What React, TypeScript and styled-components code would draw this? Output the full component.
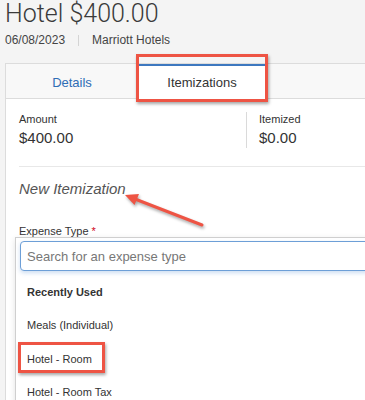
import * as React from 'react';
import styled, { createGlobalStyle } from 'styled-components';

const annotationRed = '#ee5444';

const GlobalStyle = createGlobalStyle`
  html, body {
    margin: 0;
    padding: 0;
    background: #f4f4f4;
    overflow: hidden;
  }
  body {
    font-family: "Liberation Sans", Arial, sans-serif;
    color: #333;
  }
`;

const Page = styled.div`
  position: relative;
  width: 365px;
  height: 400px;
  overflow: hidden;
  padding-left: 5px;
  box-sizing: border-box;
`;

const Title = styled.h1`
  margin: 0;
  font-family: Roboto, "Liberation Sans", sans-serif;
  font-weight: 300;
  font-size: 25px;
  line-height: 28px;
  color: #3a3a3a;
  white-space: nowrap;
`;

const Meta = styled.div`
  display: flex;
  align-items: center;
  height: 14px;
  margin-top: 5px;
  font-size: 12px;
  color: #444;
`;

const MetaDivider = styled.span`
  width: 1px;
  height: 11px;
  margin: 0 13px;
  background: #d4d4d4;
`;

const Card = styled.section`
  width: 560px;
  height: 400px;
  margin-top: 16px;
  border-top: 1px solid #dcdcdc;
  border-left: 1px solid #dcdcdc;
  background: #fff;
`;

const TabBar = styled.div`
  display: flex;
  height: 35px;
  box-sizing: border-box;
  background: #f8f8f8;
  border-bottom: 1px solid #dcdcdc;
`;

const Tab = styled.div<{ $active?: boolean; $width: number }>`
  position: relative;
  display: flex;
  align-items: center;
  justify-content: center;
  width: ${(p) => p.$width}px;
  box-sizing: border-box;
  font-size: 13px;
  color: ${(p) => (p.$active ? '#333' : '#2f6db5')};
  background: ${(p) => (p.$active ? '#fff' : 'transparent')};
  border-top: 2px solid ${(p) => (p.$active ? '#3d78bf' : 'transparent')};
  border-left: 1px solid ${(p) => (p.$active ? '#dcdcdc' : 'transparent')};
  border-right: 1px solid ${(p) => (p.$active ? '#dcdcdc' : 'transparent')};
  margin-bottom: ${(p) => (p.$active ? '-1px' : '0')};

  ${(p) =>
    p.$active &&
    `
    &::after {
      content: '';
      position: absolute;
      top: -12px;
      left: -3px;
      right: -3px;
      bottom: -3px;
      border: 3px solid ${annotationRed};
      box-shadow: 1px 2px 3px rgba(0, 0, 0, 0.35);
    }
  `}
`;

const Body = styled.div`
  padding: 13px 0 0 13px;
`;

const Summary = styled.div`
  display: flex;
  height: 36px;
`;

const SummaryCol = styled.div<{ $width?: number }>`
  width: ${(p) => (p.$width ? `${p.$width}px` : 'auto')};
  padding-left: ${(p) => (p.$width ? 0 : 12)}px;
`;

const SummaryDivider = styled.div`
  width: 1px;
  height: 36px;
  background: #dadada;
`;

const SmallLabel = styled.div`
  font-size: 11px;
  line-height: 15px;
  color: #333;
`;

const Amount = styled.div`
  margin-top: 2px;
  font-size: 15px;
  line-height: 18px;
  color: #333;
`;

const Rule = styled.div`
  height: 1px;
  margin-top: 18px;
  background: #e8e8e8;
`;

const SectionTitle = styled.div`
  margin-top: 13px;
  font-size: 15px;
  line-height: 18px;
  font-style: italic;
  color: #555;
`;

const FieldLabel = styled.div`
  margin-top: 26px;
  margin-bottom: -1px;
  font-size: 11px;
  line-height: 14px;
  color: #333;
`;

const Required = styled.span`
  margin-left: 3px;
  color: #d0021b;
`;

const Popup = styled.div`
  margin-left: -4px;
  padding: 3px 0 0 4px;
  height: 200px;
  border: 1px solid #cfcfcf;
  background: #fff;
  box-shadow: 0 2px 6px rgba(0, 0, 0, 0.12);
`;

const SearchInput = styled.input`
  display: block;
  width: 600px;
  height: 30px;
  box-sizing: border-box;
  margin: 0;
  padding: 0 6px;
  border: 1px solid #6d9fd7;
  border-radius: 4px;
  outline: none;
  box-shadow: 0 2px 4px rgba(109, 159, 215, 0.35);
  font-family: "Liberation Sans", Arial, sans-serif;
  font-size: 13px;
  color: #333;

  &::placeholder {
    color: #777;
  }
`;

const OptionList = styled.div`
  padding-top: 4px;
  margin-left: -4px;
`;

const Option = styled.div<{ $heading?: boolean; $marked?: boolean }>`
  position: relative;
  display: flex;
  align-items: center;
  height: 33.5px;
  padding-left: 11px;
  font-size: 11px;
  font-weight: ${(p) => (p.$heading ? 700 : 400)};
  color: #333;

  ${(p) =>
    p.$marked &&
    `
    &::after {
      content: '';
      position: absolute;
      top: 0;
      left: 2px;
      width: 87px;
      height: 31px;
      box-sizing: border-box;
      border: 3px solid ${annotationRed};
      box-shadow: 1px 2px 3px rgba(0, 0, 0, 0.35);
    }
  `}
`;

const Arrow = styled.svg`
  position: absolute;
  left: 115px;
  top: 185px;
  width: 100px;
  height: 50px;
  overflow: visible;
  filter: drop-shadow(1px 2px 1.5px rgba(0, 0, 0, 0.35));
`;

export default function App() {
  return (
    <Page>
      <GlobalStyle />
      <Title>Hotel $400.00</Title>
      <Meta>
        <span>06/08/2023</span>
        <MetaDivider />
        <span>Marriott Hotels</span>
      </Meta>

      <Card>
        <TabBar>
          <Tab $width={132}>Details</Tab>
          <Tab $width={128} $active>Itemizations</Tab>
        </TabBar>

        <Body>
          <Summary>
            <SummaryCol $width={227}>
              <SmallLabel>Amount</SmallLabel>
              <Amount>$400.00</Amount>
            </SummaryCol>
            <SummaryDivider />
            <SummaryCol>
              <SmallLabel>Itemized</SmallLabel>
              <Amount>$0.00</Amount>
            </SummaryCol>
          </Summary>

          <Rule />
          <SectionTitle>New Itemization</SectionTitle>

          <FieldLabel>
            Expense Type<Required>*</Required>
          </FieldLabel>
          <Popup>
            <SearchInput placeholder="Search for an expense type" readOnly />
            <OptionList>
              <Option $heading>Recently Used</Option>
              <Option>Meals (Individual)</Option>
              <Option $marked>Hotel - Room</Option>
              <Option>Hotel - Room Tax</Option>
            </OptionList>
          </Popup>
        </Body>
      </Card>

      <Arrow viewBox="0 0 100 50">
        <line x1="87" y1="40" x2="20" y2="14" stroke={annotationRed} strokeWidth="3" strokeLinecap="round" />
        <polygon points="10,10 24,9 19.5,20" fill={annotationRed} />
      </Arrow>
    </Page>
  );
}
